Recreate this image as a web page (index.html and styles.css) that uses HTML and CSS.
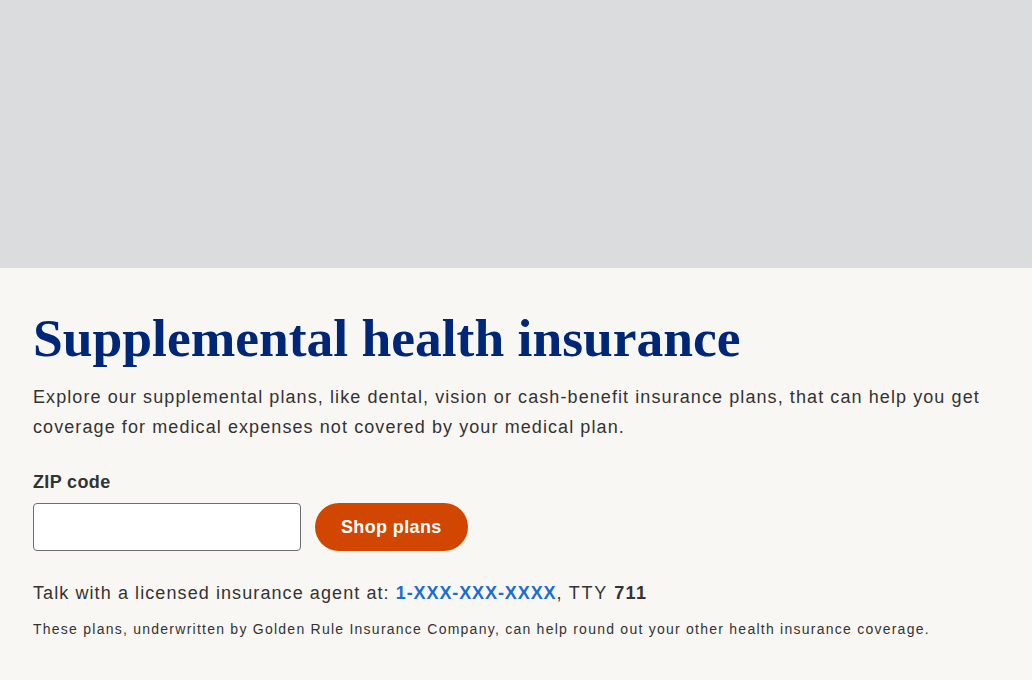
FILE: index.html
```html
<!DOCTYPE html>
<html>
<head>
<meta charset="utf-8"/>
<title>Supplemental health insurance</title>
<link rel="stylesheet" href="styles.css">
</head>
<body>
<div class="hero-image"></div>

<div class="intro">
<h1 class="title">Supplemental health insurance</h1>
<p class="lead">Explore our supplemental plans, like dental, vision or cash-benefit insurance plans, that can help you get coverage for medical expenses not covered by your medical plan.</p>

<form class="zip-form">
<label class="zip-label" for="zip">ZIP code</label>
<div class="zip-row">
<input class="zip-input" id="zip" type="text"/>
<button class="shop-btn" type="button">Shop plans</button>
</div>
</form>

<p class="agent">Talk with a licensed insurance agent at: <a class="phone" href="#">1-XXX-XXX-XXXX</a>, <span class="tty">TTY</span> <strong>711</strong></p>
<p class="note">These plans, underwritten by Golden Rule Insurance Company, can help round out your other health insurance coverage.</p>
</div>
</body>
</html>
```
FILE: styles.css
```css
body {
   margin: 0;
   background-color: #f9f7f4;
   font-family: "Liberation Sans", Arial, sans-serif;
   color: #333333;
   letter-spacing: 0.068em;
}

.hero-image {
   height: 268px;
   background-color: #dbdcde;
}

.intro {
   padding: 40px 33px 30px;
}

.title {
   margin: 0;
   font-family: "Liberation Serif", "Times New Roman", serif;
   font-weight: bold;
   font-size: 53.5px;
   line-height: 60px;
   color: #002677;
   letter-spacing: 0;
}

.lead {
   margin: 14px 0 0;
   font-size: 18px;
   line-height: 30px;
   max-width: 960px;
}

.zip-form {
   margin-top: 28px;
}

.zip-label {
   display: block;
   font-weight: bold;
   font-size: 18px;
   line-height: 24px;
   letter-spacing: 0.02em;
}

.zip-row {
   display: flex;
   gap: 14px;
   margin-top: 9px;
}

.zip-input {
   width: 268px;
   height: 48px;
   box-sizing: border-box;
   border: 1px solid #6d6f70;
   border-radius: 4px;
   background: white;
   font-size: 18px;
   padding: 0 12px;
}

.shop-btn {
   height: 48px;
   padding: 0 26px;
   border: none;
   border-radius: 24px;
   background-color: #d14600;
   color: white;
   font-family: "Liberation Sans", Arial, sans-serif;
   font-weight: bold;
   font-size: 18px;
   letter-spacing: 0.02em;
}

.agent {
   margin: 30px 0 0;
   font-size: 18px;
   line-height: 24px;
}

.phone {
   color: #196ecf;
   font-weight: bold;
   text-decoration: none;
   letter-spacing: 0.05em;
}

.tty {
   letter-spacing: 0.1em;
}

.agent strong {
   letter-spacing: 0.08em;
}

.note {
   margin: 14px 0 0;
   font-size: 14px;
   line-height: 20px;
   letter-spacing: 0.089em;
}
```
